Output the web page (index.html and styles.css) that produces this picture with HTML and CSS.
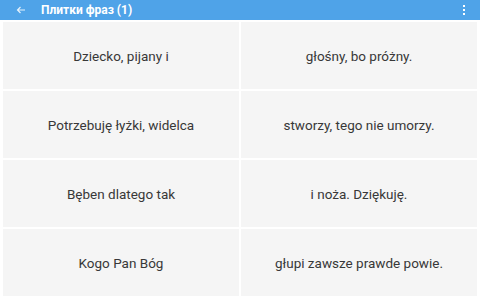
FILE: index.html
```html
<!DOCTYPE html>
<html lang="pl">
<head>
    <meta charset="UTF-8">
    <meta name="viewport" content="width=device-width, initial-scale=1.0">
    <title>Плитки фраз</title>
    <link rel="stylesheet" href="styles.css">
</head>
<body>
    <div class="toolbar">
        <svg class="back" width="10" height="10" viewBox="0 0 10 10">
            <path d="M9 5H1.5M4.5 2L1.5 5l3 3" fill="none" stroke="#fff" stroke-width="1.2"/>
        </svg>
        <div class="title">Плитки фраз (1)</div>
        <svg class="menu" width="4" height="12" viewBox="0 0 4 12">
            <rect x="1" y="1" width="2" height="2" fill="#fff"/>
            <rect x="1" y="5" width="2" height="2" fill="#fff"/>
            <rect x="1" y="9" width="2" height="2" fill="#fff"/>
        </svg>
    </div>

    <div class="tiles">
        <div class="tile">Dziecko, pijany i</div>
        <div class="tile">głośny, bo próżny.</div>
        <div class="tile">Potrzebuję łyżki, widelca</div>
        <div class="tile">stworzy, tego nie umorzy.</div>
        <div class="tile">Bęben dlatego tak</div>
        <div class="tile">i noża. Dziękuję.</div>
        <div class="tile">Kogo Pan Bóg</div>
        <div class="tile">głupi zawsze prawde powie.</div>
    </div>
</body>
</html>
```

FILE: styles.css
```css
html, body {
    margin: 0;
    height: 100%;
}
body {
    font-family: Roboto, "Noto Sans", sans-serif;
    background: #fff;
    display: flex;
    flex-direction: column;
}
.toolbar {
    height: 20px;
    background: #4fa3e8;
    display: flex;
    align-items: center;
    padding: 0 14px 0 16px;
    flex-shrink: 0;
}
.back {
    margin-right: 15px;
    opacity: 0.85;
}
.title {
    flex: 1;
    color: #fff;
    font-weight: bold;
    font-size: 12px;
}
.tiles {
    flex: 1;
    display: grid;
    grid-template-columns: 1fr 1fr;
    grid-template-rows: repeat(4, 1fr);
    gap: 2px;
    padding: 2px 3px 4px 3px;
}
.tile {
    background: #f5f5f5;
    color: #383838;
    font-size: 13.5px;
    display: flex;
    align-items: center;
    justify-content: center;
    text-align: center;
}
```
